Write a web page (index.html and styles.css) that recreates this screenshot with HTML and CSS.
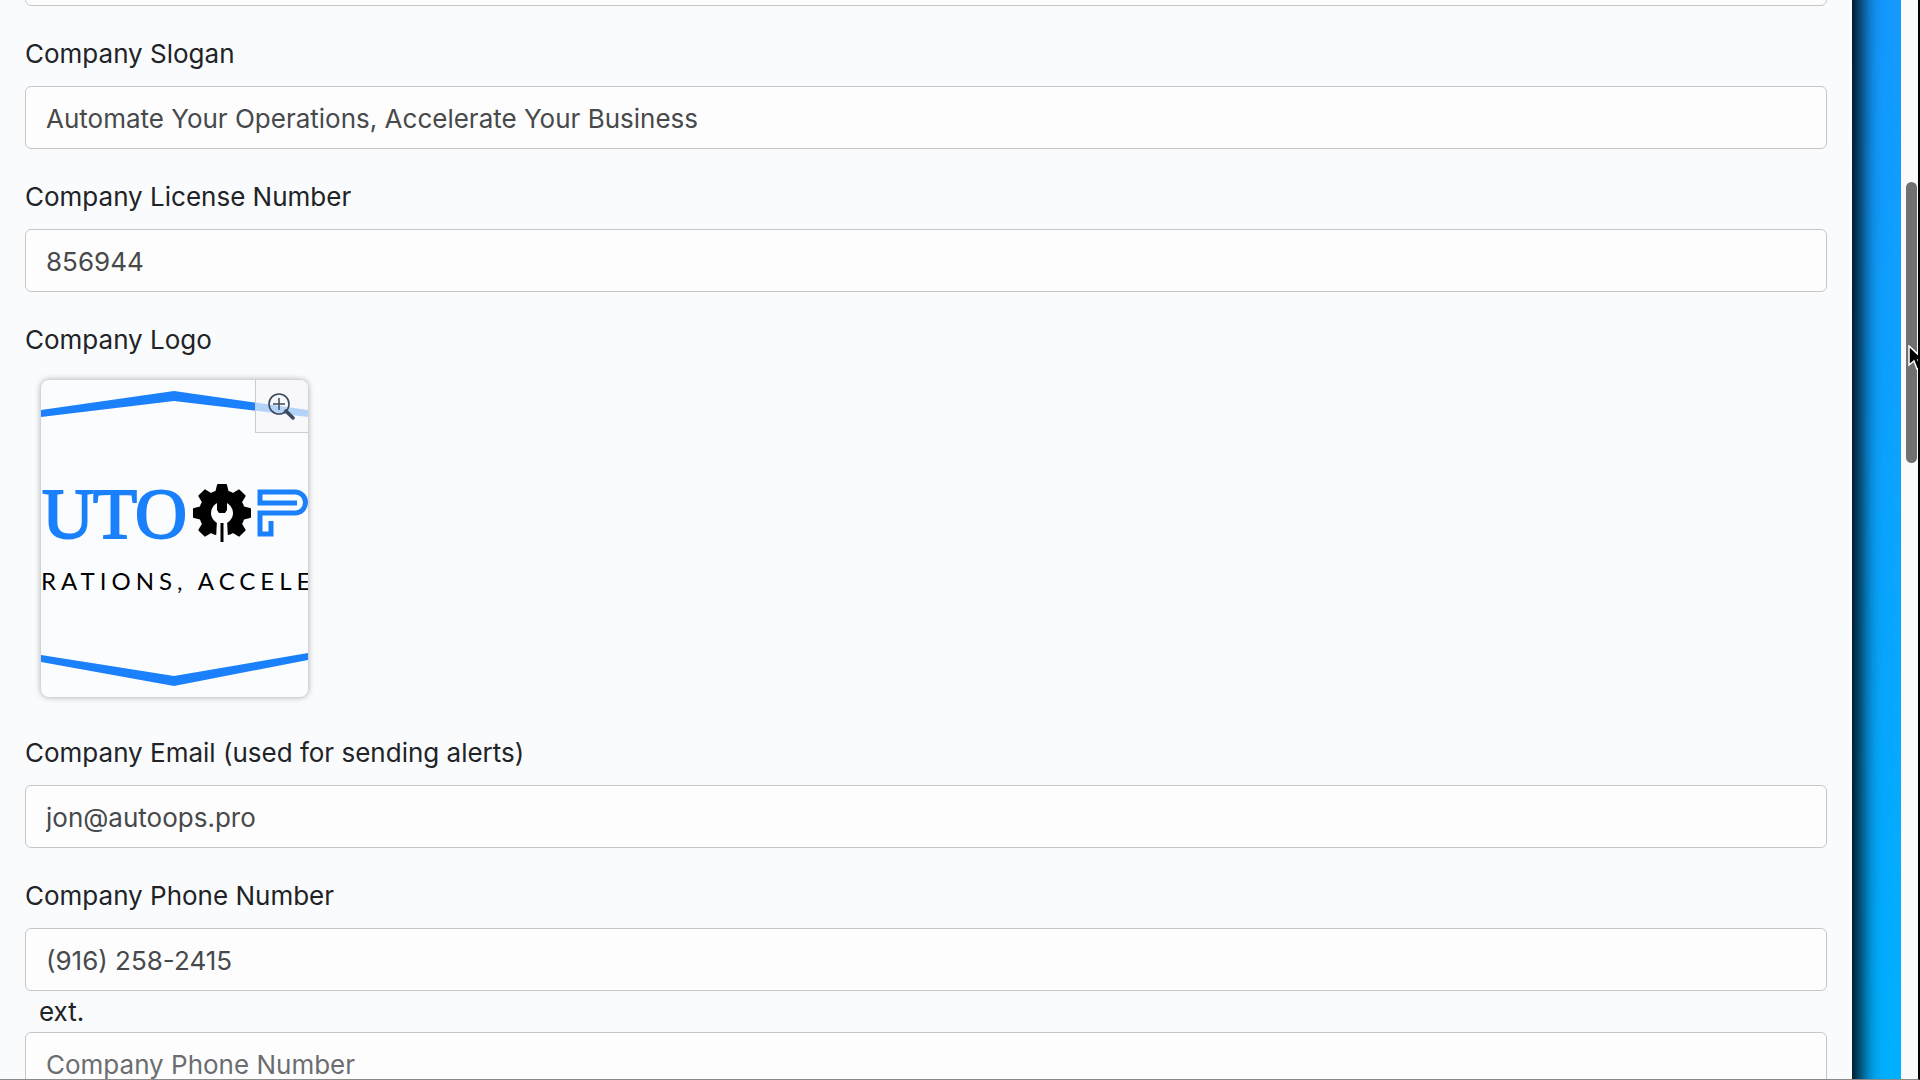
FILE: index.html
```html
<!DOCTYPE html>
<html lang="en">
<head>
    <meta charset="UTF-8">
    <meta name="viewport" content="width=device-width, initial-scale=1.0">
    <title>Company Settings</title>
    <link rel="stylesheet" href="styles.css">
</head>
<body>
    <main class="page">
        <form class="panel">
            <div class="form-group">
                <input type="text" class="form-control" name="companyName" aria-label="Company Name">
            </div>
            <div class="form-group">
                <label for="slogan">Company Slogan</label>
                <input type="text" class="form-control" id="slogan" name="slogan" value="Automate Your Operations, Accelerate Your Business">
            </div>
            <div class="form-group">
                <label for="license">Company License Number</label>
                <input type="text" class="form-control" id="license" name="license" value="856944">
            </div>
            <div class="form-group">
                <label for="logoZoom">Company Logo</label>
                <div class="logo-card">
                    <svg class="logo" viewBox="0 0 267 317" aria-hidden="true">
                        <g fill="#1a80fb">
                            <path d="M0 30 133 11 267 30V37L133 21 0 37Z"/>
                            <path d="M0 275 133 296 267 273V280L133 306 0 282Z"/>
                        </g>
                        <text class="logo-name" x="1 52 94" y="158">UTO</text>
                        <!-- gear -->
                        <g transform="translate(181 133)">
                            <circle r="23"/>
                            <path id="tooth" d="M-7-20-5-28Q-5-29-4-29H4Q5-29 5-28L7-20Z"/>
                            <use href="#tooth" transform="rotate(45)"/>
                            <use href="#tooth" transform="rotate(90)"/>
                            <use href="#tooth" transform="rotate(135)"/>
                            <use href="#tooth" transform="rotate(225)"/>
                            <use href="#tooth" transform="rotate(270)"/>
                            <use href="#tooth" transform="rotate(315)"/>
                            <!-- wrench -->
                            <circle r="11" fill="#fbfcfe"/>
                            <path d="M-5 8H5L6 25H-6Z" fill="#fbfcfe"/>
                            <path d="M-5-14H5V-3L3 0H-3L-5-3Z"/>
                            <path d="M-1.5 10H1.5V29H-1.5Z"/>
                        </g>
                        <path d="M256 123H219V112H254A10.5 10.5 0 0 1 254 133H219V154H230V141" fill="none" stroke="#1a80fb" stroke-width="5"/>
                        <text class="logo-tagline" x="0" y="210">RATIONS, ACCELE</text>
                    </svg>
                    <button type="button" class="zoom-btn" id="logoZoom" aria-label="Zoom logo">
                        <svg viewBox="0 0 28 28" fill="none" stroke="#3b4a5c">
                            <circle cx="11" cy="12" r="10" stroke-width="1.6"/>
                            <path d="M11 6V18M5 12H17" stroke-width="1.5"/>
                            <path d="M18 19 25 26" stroke-width="3.5" stroke-linecap="round"/>
                        </svg>
                    </button>
                </div>
            </div>
            <div class="form-group">
                <label for="email">Company Email (used for sending alerts)</label>
                <input type="email" class="form-control" id="email" name="email" value="jon@autoops.pro">
            </div>
            <div class="form-group">
                <label for="phone">Company Phone Number</label>
                <input type="tel" class="form-control" id="phone" name="phone" value="(916) 258-2415">
                <label class="ext" for="ext">ext.</label>
                <input type="text" class="form-control" id="ext" name="ext" placeholder="Company Phone Number">
            </div>
        </form>
    </main>
    <div class="scrollbar">
        <div class="scroll-thumb"></div>
    </div>
    <svg class="cursor" viewBox="0 0 16 26" aria-hidden="true">
        <path d="M1 1V20L6 16 9 24 13 22 10 15H16Z" fill="#000" stroke="#fff" stroke-width="1.5"/>
    </svg>
</body>
</html>
```

FILE: styles.css
```css
* {
    box-sizing: border-box;
}
body {
    display: flex;
    height: 100vh;
    margin: 0;
    overflow: hidden;
    position: relative;
    font-family: Inter, "Liberation Sans", sans-serif;
    font-size: 26px;
    color: #212326;
    border-right: 2px solid #000;
    border-bottom: 1px solid #8a8a8a;
}
.page {
    flex: 1;
    padding-right: 49px;
    overflow: hidden;
    background: linear-gradient(#1499ff, #00b0ff);
}
.panel {
    min-height: 100%;
    /* scrolled part of the form */
    margin-top: -57px;
    padding: 0 25px;
    background-color: #fafbfd;
    box-shadow: 0 0 20px 9px #000;
}
.form-group {
    margin-bottom: 28px;
}
label {
    display: block;
    margin-bottom: 12px;
    line-height: 40px;
}
.form-control {
    display: block;
    width: 100%;
    height: 63px;
    padding: 2px 20px 0;
    font-family: inherit;
    font-size: 26px;
    color: #47494b;
    background-color: #fdfdfe;
    border: 1px solid #c4c6c8;
    border-radius: 6px;
}
.form-control::placeholder {
    color: #6b6e71;
    opacity: 1;
}
.ext {
    margin: 0 0 0 14px;
    padding-top: 1px;
}
.logo-card {
    position: relative;
    width: 267px;
    height: 317px;
    margin: 20px 16px 36px;
    overflow: hidden;
    background-color: #fbfcfe;
    border-radius: 8px;
    box-shadow: 0 0 6px rgba(0, 0, 0, 0.35);
}
.logo {
    display: block;
    width: 100%;
}
.logo-name {
    font-family: "Liberation Serif", serif;
    font-size: 72px;
    fill: #1a80fb;
    stroke: #1a80fb;
    stroke-width: 2px;
}
.logo-tagline {
    font-family: Lato, sans-serif;
    font-size: 24px;
    letter-spacing: 5px;
}
.zoom-btn {
    position: absolute;
    top: 0;
    right: 0;
    width: 53px;
    height: 53px;
    padding: 12px;
    background-color: rgba(246, 247, 248, 0.7);
    border: solid #ccc;
    border-width: 0 0 1px 1px;
    cursor: pointer;
}
.zoom-btn svg {
    display: block;
    width: 28px;
}
.scrollbar {
    width: 17px;
    padding: 182px 1px 0 5px;
    background-color: #fafafa;
}
.scroll-thumb {
    height: 281px;
    background-color: #707070;
    border-radius: 6px;
}
.cursor {
    position: absolute;
    top: 345px;
    right: -6px;
    width: 16px;
}
```
